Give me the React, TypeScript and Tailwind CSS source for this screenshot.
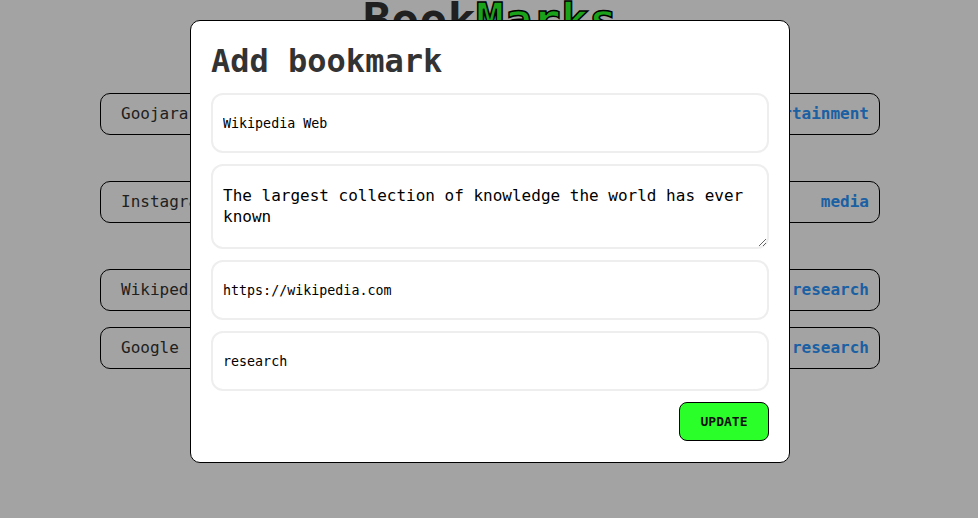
import { useState } from "react";

type Bookmark = {
  id: number;
  name: string;
  tag: string;
  gap: string;
};

const bookmarks: Bookmark[] = [
  { id: 1, name: "Goojara", tag: "entertainment", gap: "mt-0" },
  { id: 2, name: "Instagram", tag: "media", gap: "mt-[46px]" },
  { id: 3, name: "Wikipedia", tag: "research", gap: "mt-[46px]" },
  { id: 4, name: "Google", tag: "research", gap: "mt-[16px]" },
];

const mono = "font-['DejaVu_Sans_Mono','Liberation_Mono',monospace]";

export default function App() {
  const [title, setTitle] = useState("Wikipedia Web");
  const [desc, setDesc] = useState(
    "The largest collection of knowledge the world has ever known"
  );
  const [url, setUrl] = useState("https://wikipedia.com");
  const [tag, setTag] = useState("research");

  return (
    <div className={`relative min-h-[518px] bg-white overflow-hidden pl-[2px] ${mono}`}>
      {/* page behind the modal */}
      <h1 className="text-center text-[47px] font-bold leading-none -mt-[4px] text-[#333]">
        Book
        <span className="text-[#2aff2a] [-webkit-text-stroke:1.5px_#000]">Marks</span>
      </h1>
      <div className="max-w-[780px] mx-auto mt-[50px] flex flex-col">
        {bookmarks.map((b) => (
          <div
            key={b.id}
            className={`${b.gap} h-[42px] flex items-center justify-between border border-black rounded-[10px] pl-[20px] pr-[10px]`}
          >
            <span className="text-[16px] text-[#333]">{b.name}</span>
            <span className="text-[16px] font-bold text-[#2a96ff]">{b.tag}</span>
          </div>
        ))}
      </div>

      {/* overlay + modal */}
      <div className="fixed inset-0 bg-black/[0.36] flex justify-center items-start pt-[20px] pl-[2px]">
        <div className="w-[600px] bg-white border border-black rounded-[10px] px-[20px] pt-[20px] pb-[21px]">
          <h2 className="text-[32px] font-bold leading-[40px] text-[#333] mb-[12px]">
            Add bookmark
          </h2>
          <div className="flex flex-col gap-[11px]">
            <input
              value={title}
              onChange={(e) => setTitle(e.target.value)}
              className="h-[60px] w-full border-2 border-[#eeeeee] rounded-[12px] px-[10px] text-[13.33px] text-black outline-none"
            />
            <textarea
              value={desc}
              onChange={(e) => setDesc(e.target.value)}
              className="h-[85px] w-full border-2 border-[#eeeeee] rounded-[12px] px-[10px] pt-[19px] text-[16px] leading-[21px] text-black outline-none"
            />
            <input
              value={url}
              onChange={(e) => setUrl(e.target.value)}
              className="h-[60px] w-full border-2 border-[#eeeeee] rounded-[12px] px-[10px] text-[13.33px] text-black outline-none"
            />
            <input
              value={tag}
              onChange={(e) => setTag(e.target.value)}
              className="h-[60px] w-full border-2 border-[#eeeeee] rounded-[12px] px-[10px] text-[13.33px] text-black outline-none"
            />
          </div>
          <div className="flex justify-end mt-[11px]">
            <button className="w-[90px] h-[39px] bg-[#2aff2a] border border-black rounded-[8px] text-[13px] font-bold text-[#111]">
              UPDATE
            </button>
          </div>
        </div>
      </div>
    </div>
  );
}
